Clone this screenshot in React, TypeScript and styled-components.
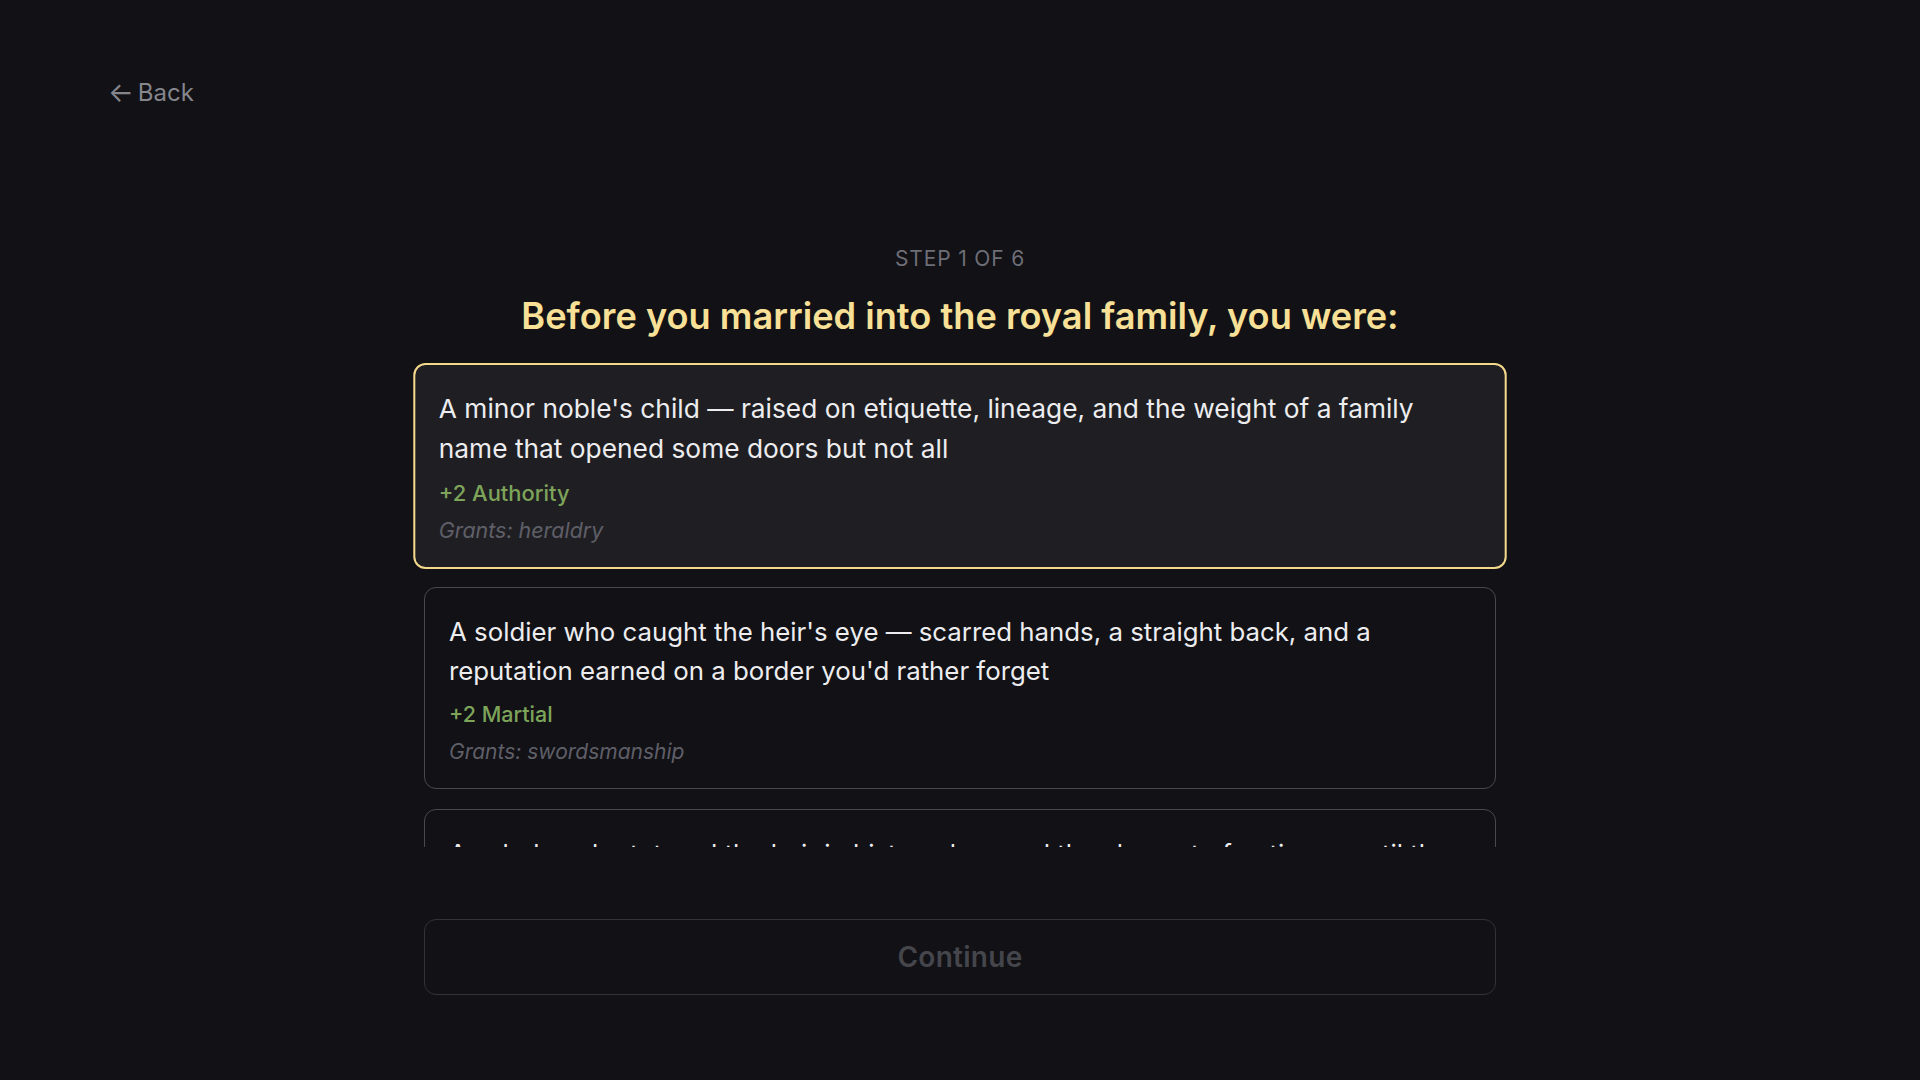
import React, { useState } from 'react';
import styled, { createGlobalStyle } from 'styled-components';

const GlobalStyle = createGlobalStyle`
  * { box-sizing: border-box; }
  html, body {
    margin: 0;
    padding: 0;
    background: #111116;
    font-family: Inter, 'Noto Sans', 'Liberation Sans', sans-serif;
    -webkit-font-smoothing: antialiased;
  }
`;

const Page = styled.div`
  min-height: 100vh;
  padding: 75px 110px 0;
  background: #111116;
`;

const BackButton = styled.button`
  display: flex;
  align-items: center;
  gap: 4px;
  height: 36px;
  padding: 0;
  border: none;
  background: none;
  color: #85858c;
  font-family: inherit;
  font-size: 24px;
  line-height: 36px;
  cursor: pointer;
`;

const Arrow = styled.span`
  margin-left: -2px;
  font-size: 27px;
  line-height: 36px;
`;

const Main = styled.main`
  width: 1104px;
  margin: 134px auto 0;
  display: flex;
  flex-direction: column;
  align-items: center;
`;

const StepLabel = styled.div`
  font-size: 21px;
  line-height: 28px;
  letter-spacing: 0.04em;
  text-transform: uppercase;
  color: #6e6e76;
`;

const Title = styled.h1`
  margin: 20px 0 18px;
  font-size: 36.2px;
  line-height: 46px;
  font-weight: 600;
  color: #f8e096;
  text-align: center;
`;

const OptionList = styled.div`
  width: 100%;
  height: 490px;
  padding: 8px 16px;
  overflow-y: auto;
  overflow-x: hidden;
  display: flex;
  flex-direction: column;
  gap: 20px;
  scrollbar-width: none;
  &::-webkit-scrollbar { display: none; }
`;

const Option = styled.button<{ $selected: boolean }>`
  flex-shrink: 0;
  width: 100%;
  padding: ${(p) => (p.$selected ? '23px 23px 20px' : '24px 24px 21px')};
  border: ${(p) => (p.$selected ? '2px solid #f3d98a' : '1px solid #48484f')};
  border-radius: 12px;
  background: ${(p) => (p.$selected ? '#1f1f23' : 'transparent')};
  transform: ${(p) => (p.$selected ? 'scale(1.02)' : 'none')};
  text-align: left;
  font-family: inherit;
  cursor: pointer;
  display: flex;
  flex-direction: column;
`;

const OptionText = styled.div`
  font-size: 25.8px;
  line-height: 39px;
  color: #ededef;
`;

const Bonus = styled.div`
  margin-top: 10px;
  font-size: 21.5px;
  line-height: 28px;
  font-weight: 500;
  color: #7ea45a;
`;

const Grants = styled.div`
  margin-top: 9px;
  font-size: 21px;
  line-height: 30px;
  font-style: italic;
  color: #5f5f68;
`;

const ContinueButton = styled.button`
  width: 1072px;
  height: 76px;
  margin-top: 72px;
  border: 1px solid #323238;
  border-radius: 12px;
  background: transparent;
  color: #45454c;
  font-family: inherit;
  font-size: 28px;
  font-weight: 600;
  letter-spacing: 0.01em;
  cursor: not-allowed;
`;

interface IOption {
  id: string;
  text: string;
  bonus: string;
  grants: string;
}

const options: IOption[] = [
  {
    id: 'noble',
    text: "A minor noble's child — raised on etiquette, lineage, and the weight of a family name that opened some doors but not all",
    bonus: '+2 Authority',
    grants: 'heraldry',
  },
  {
    id: 'soldier',
    text: "A soldier who caught the heir's eye — scarred hands, a straight back, and a reputation earned on a border you'd rather forget",
    bonus: '+2 Martial',
    grants: 'swordsmanship',
  },
  {
    id: 'scholar',
    text: 'A scholar who tutored the heir in history, law, and the slow art of patience until the lessons became something more',
    bonus: '+2 Learning',
    grants: 'history',
  },
  {
    id: 'merchant',
    text: "A merchant's daughter with ledgers in her head and friends in every harbour from here to the southern coast",
    bonus: '+2 Stewardship',
    grants: 'trade',
  },
];

const App = () => {
  const [selected, setSelected] = useState('noble');
  return (
    <>
      <GlobalStyle />
      <Page>
        <BackButton>
          <Arrow>←</Arrow>
          Back
        </BackButton>
        <Main>
          <StepLabel>Step 1 of 6</StepLabel>
          <Title>Before you married into the royal family, you were:</Title>
          <OptionList>
            {options.map((opt) => (
              <Option
                key={opt.id}
                $selected={selected === opt.id}
                onClick={() => setSelected(opt.id)}
              >
                <OptionText>{opt.text}</OptionText>
                <Bonus>{opt.bonus}</Bonus>
                <Grants>Grants: {opt.grants}</Grants>
              </Option>
            ))}
          </OptionList>
          <ContinueButton disabled>Continue</ContinueButton>
        </Main>
      </Page>
    </>
  );
};

export default App;
